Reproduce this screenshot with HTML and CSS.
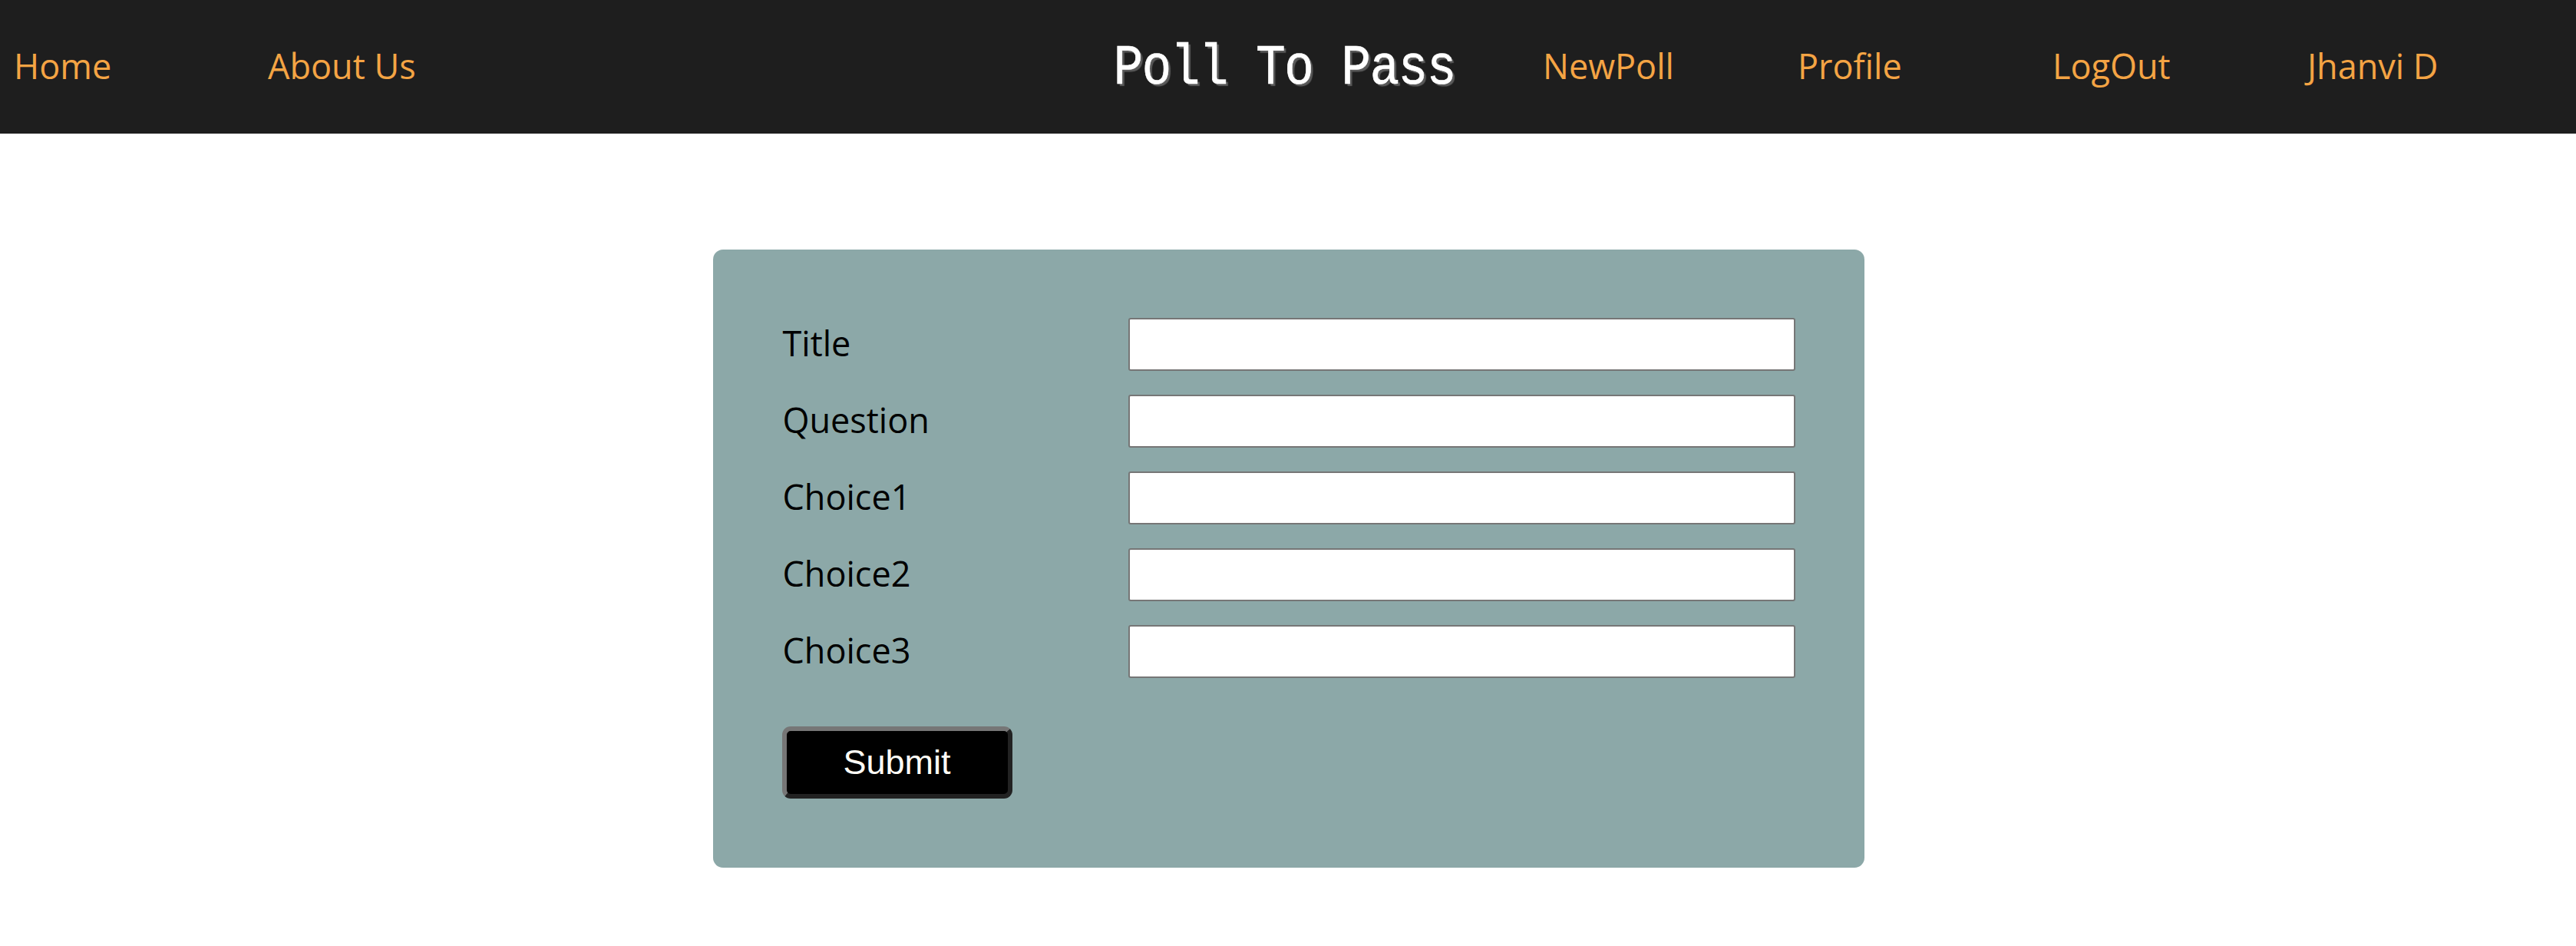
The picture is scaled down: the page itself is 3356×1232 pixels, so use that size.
FILE: index.html
```html
<!DOCTYPE html>
<html lang="en">
<head>
<meta charset="utf-8">
<title>Poll To Pass</title>
<link rel="stylesheet" href="styles.css">
</head>
<body>
<header class="topbar">
  <ul class="nav nav-left">
    <li><a href="#">Home</a></li>
    <li><a href="#">About Us</a></li>
  </ul>
  <h1 class="brand">Poll To Pass</h1>
  <ul class="nav nav-right">
    <li><a href="#">NewPoll</a></li>
    <li><a href="#">Profile</a></li>
    <li><a href="#">LogOut</a></li>
    <li><a href="#">Jhanvi D</a></li>
  </ul>
</header>
<main class="page">
  <form class="poll-card">
    <div class="fields">
      <label class="field-label" for="title">Title</label>
      <input class="field-input" id="title" type="text">
      <label class="field-label" for="question">Question</label>
      <input class="field-input" id="question" type="text">
      <label class="field-label" for="c1">Choice1</label>
      <input class="field-input" id="c1" type="text">
      <label class="field-label" for="c2">Choice2</label>
      <input class="field-input" id="c2" type="text">
      <label class="field-label" for="c3">Choice3</label>
      <input class="field-input" id="c3" type="text">
    </div>
    <button class="submit-btn" type="button">Submit</button>
  </form>
</main>
</body>
</html>
```
FILE: styles.css
```css
* { box-sizing: border-box; }
html, body { margin: 0; padding: 0; background: #ffffff; }
body { font-family: "Open Sans", "Noto Sans", sans-serif; }

.topbar {
  height: 174px;
  background: #1e1e1e;
  display: flex;
  align-items: center;
  padding: 0 18px 4px 18px;
}
.nav {
  list-style: none;
  margin: 0;
  padding: 0;
  display: flex;
  align-items: center;
}
.nav li { width: 331px; }
.nav-right li { width: 332px; }
.nav a {
  color: #f4a444;
  text-decoration: none;
  font-size: 45px;
  line-height: 1;
}
.brand {
  display: inline-block;
  margin: 7px 0 0 auto;
  font-family: "Liberation Mono", monospace;
  font-weight: normal;
  font-size: 64px;
  letter-spacing: -1.3px;
  color: #ffffff;
  line-height: 1;
  text-shadow: 3px 3px 1px #5a5a5a;
  transform: scaleY(1.15);
  -webkit-text-stroke: 0.6px #ffffff;
}
.nav-right { margin-left: 114px; }

.page {
  display: flex;
  justify-content: center;
  padding-top: 151px;
  padding-left: 1px;
}
.poll-card {
  width: 1500px;
  background: #8ca8a8;
  border-radius: 13px;
  padding: 89px 90px 90px 91px;
}
.fields {
  display: grid;
  grid-template-columns: 450px 869px;
  row-gap: 31px;
  align-items: center;
}
.field-label {
  font-size: 45px;
  color: #000000;
  line-height: 1;
  padding-bottom: 4px;
}
.field-input {
  height: 69px;
  width: 869px;
  margin: 0;
  background: #ffffff;
  border: 2px solid #767676;
  border-radius: 3px;
  font-size: 30px;
}
.submit-btn {
  display: block;
  margin-top: 63px;
  margin-left: -1px;
  width: 300px;
  height: 94px;
  background: #000000;
  color: #fffdf6;
  font-family: "Liberation Sans", Arial, sans-serif;
  font-size: 45px;
  border-width: 6px;
  border-style: solid;
  border-color: #767676 #222222 #222222 #767676;
  border-radius: 11px;
  padding: 0;
}
```
